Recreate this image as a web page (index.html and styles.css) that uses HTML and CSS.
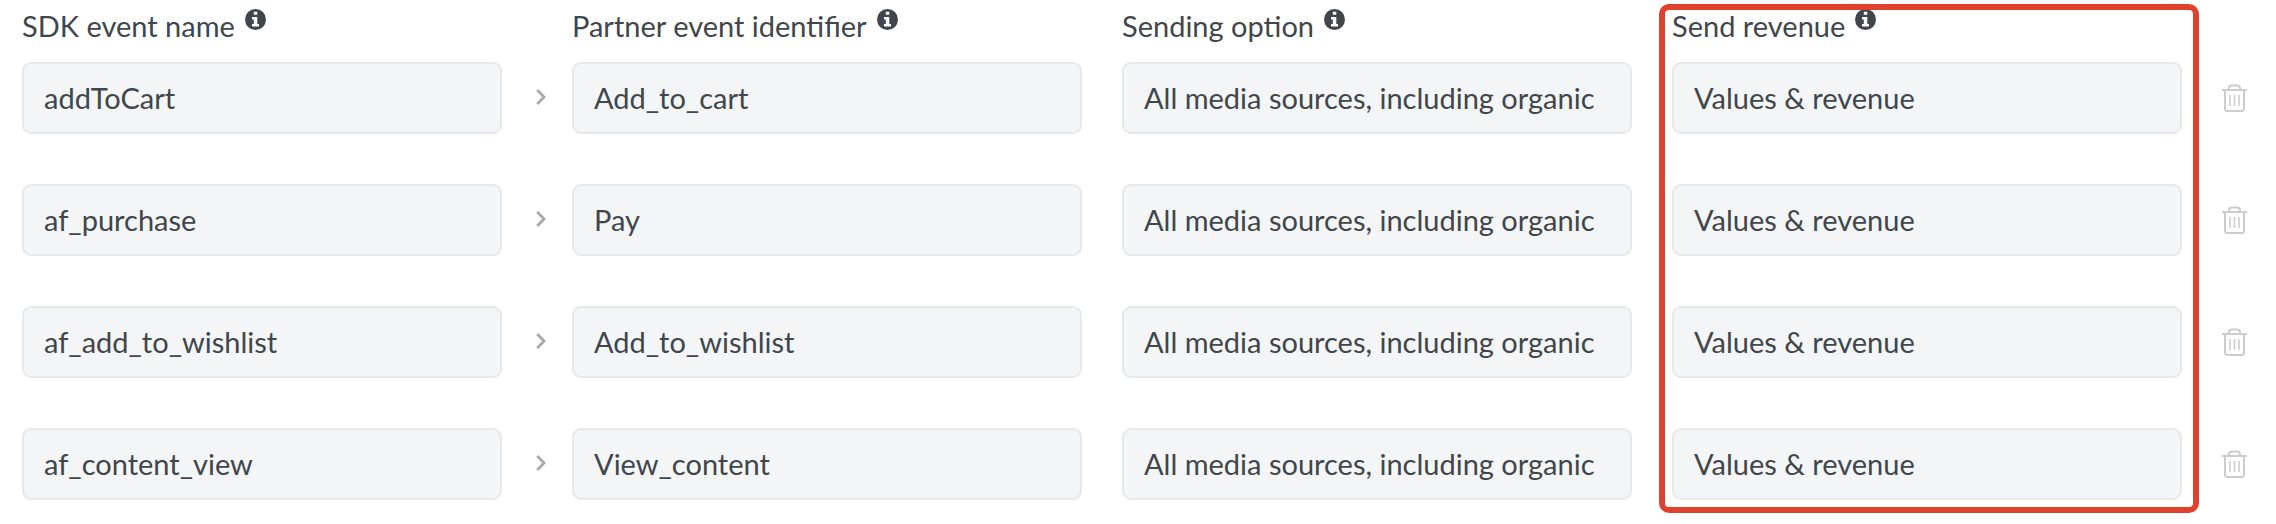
FILE: index.html
```html
<!DOCTYPE html>
<html lang="en">
<head>
<meta charset="utf-8">
<meta name="viewport" content="width=device-width, initial-scale=1">
<title>Event mapping</title>
<link rel="stylesheet" href="styles.css">
</head>
<body>
<svg class="sprite" aria-hidden="true">
  <symbol id="info" viewBox="0 0 21 21">
    <circle cx="10.5" cy="10.5" r="10.5" fill="currentColor"/>
    <path fill="#fff" d="M8.8 2.7h3.5v3H8.8zM7 8h5.3v7H14v2.6H7V15h1.8v-4.4H7z"/>
  </symbol>
  <symbol id="chevron" viewBox="0 0 10 16">
    <path d="M1.2 1 8 8l-6.800 7" fill="none" stroke="currentColor" stroke-width="2.800"/>
  </symbol>
  <symbol id="trash" viewBox="0 0 25 28">
    <g fill="none" stroke="currentColor" stroke-width="2">
      <path d="M0 6h25M7 6V4.500Q7 1.500 10 1.500h5Q18 1.500 18 4.500V6M3 6v18.500q0 2.500 2.500 2.500h14q2.500 0 2.500-2.500V6"/>
      <path d="M8 11v11M12.500 11v11M17 11v11" stroke-width="1.600"/>
    </g>
  </symbol>
</svg>
<form class="mapping">
  <div class="heading col-sdk"><span id="h-sdk">SDK event name</span><svg class="info"><use href="#info"/></svg></div>
  <div class="heading col-partner"><span id="h-partner">Partner event identifier</span><svg class="info"><use href="#info"/></svg></div>
  <div class="heading col-option"><span id="h-option">Sending option</span><svg class="info"><use href="#info"/></svg></div>
  <div class="heading col-revenue"><span id="h-revenue">Send revenue</span><svg class="info"><use href="#info"/></svg></div>

  <input class="field col-sdk" aria-labelledby="h-sdk" value="addToCart" readonly>
  <svg class="chevron"><use href="#chevron"/></svg>
  <input class="field col-partner" aria-labelledby="h-partner" value="Add_to_cart" readonly>
  <input class="field col-option" aria-labelledby="h-option" value="All media sources, including organic" readonly>
  <input class="field col-revenue" aria-labelledby="h-revenue" value="Values &amp; revenue" readonly>
  <button class="delete" type="button" aria-label="Delete addToCart"><svg class="trash"><use href="#trash"/></svg></button>

  <input class="field col-sdk" aria-labelledby="h-sdk" value="af_purchase" readonly>
  <svg class="chevron"><use href="#chevron"/></svg>
  <input class="field col-partner" aria-labelledby="h-partner" value="Pay" readonly>
  <input class="field col-option" aria-labelledby="h-option" value="All media sources, including organic" readonly>
  <input class="field col-revenue" aria-labelledby="h-revenue" value="Values &amp; revenue" readonly>
  <button class="delete" type="button" aria-label="Delete af_purchase"><svg class="trash"><use href="#trash"/></svg></button>

  <input class="field col-sdk" aria-labelledby="h-sdk" value="af_add_to_wishlist" readonly>
  <svg class="chevron"><use href="#chevron"/></svg>
  <input class="field col-partner" aria-labelledby="h-partner" value="Add_to_wishlist" readonly>
  <input class="field col-option" aria-labelledby="h-option" value="All media sources, including organic" readonly>
  <input class="field col-revenue" aria-labelledby="h-revenue" value="Values &amp; revenue" readonly>
  <button class="delete" type="button" aria-label="Delete af_add_to_wishlist"><svg class="trash"><use href="#trash"/></svg></button>

  <input class="field col-sdk" aria-labelledby="h-sdk" value="af_content_view" readonly>
  <svg class="chevron"><use href="#chevron"/></svg>
  <input class="field col-partner" aria-labelledby="h-partner" value="View_content" readonly>
  <input class="field col-option" aria-labelledby="h-option" value="All media sources, including organic" readonly>
  <input class="field col-revenue" aria-labelledby="h-revenue" value="Values &amp; revenue" readonly>
  <button class="delete" type="button" aria-label="Delete af_content_view"><svg class="trash"><use href="#trash"/></svg></button>

  <div class="highlight"></div>
</form>
</body>
</html>
```
FILE: styles.css
```css
* {
  box-sizing: border-box;
}

body {
  margin: 0;
  background: #fff;
  color: #40464b;
  font-family: Lato, "Open Sans", sans-serif;
  font-size: 29px;
  line-height: 34px;
}

.sprite {
  display: none;
}

.mapping {
  position: relative;
  display: grid;
  grid-template-columns: 480fr 70px 510fr 40px 510fr 40px 510fr 40px 25px;
  row-gap: 50px;
  padding: 9px 29px 13px 22px;
}

/* The heading row sits closer to its fields than the rows do to each other */
.heading {
  display: flex;
  align-items: flex-start;
  gap: 10px;
  margin-bottom: -31px;
  white-space: nowrap;
}

.info {
  width: 21px;
  height: 21px;
}

.field {
  width: 100%;
  min-width: 0;
  height: 72px;
  padding: 0 20px 2px;
  border: 2px solid #e7e8e9;
  border-radius: 9px;
  background: #f4f5f7;
  color: inherit;
  font: inherit;
  outline: none;
}

.col-sdk {
  grid-column: 1;
}

.col-partner {
  grid-column: 3;
}

.col-option {
  grid-column: 5;
}

.col-revenue {
  grid-column: 7;
}

.chevron {
  grid-column: 2;
  align-self: center;
  justify-self: end;
  width: 10px;
  height: 16px;
  margin: 0 26px 2px 0;
  color: #a9abad;
}

.delete {
  grid-column: 9;
  height: 72px;
  padding: 0;
  border: 0;
  background: none;
  color: #ccc;
  cursor: pointer;
}

.trash {
  display: block;
  width: 25px;
  height: 28px;
}

/* Frame over the whole "Send revenue" column */
.highlight {
  position: absolute;
  grid-column: 7 / 8;
  grid-row: 1 / 6;
  top: -5px;
  right: -17px;
  bottom: -13px;
  left: -13px;
  border: 6px solid #df412d;
  border-radius: 10px;
  pointer-events: none;
}
```
